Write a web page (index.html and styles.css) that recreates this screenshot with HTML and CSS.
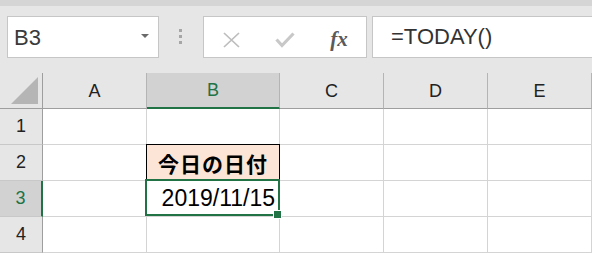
FILE: index.html
```html
<!DOCTYPE html>
<html lang="ja">
<head>
  <meta charset="UTF-8">
  <meta name="viewport" content="width=device-width, initial-scale=1.0">
  <title>Excel - TODAY</title>
  <link rel="stylesheet" href="styles.css">
</head>
<body>
  <div class="app">
    <div class="ribbon-edge"></div>

    <div class="toolbar">
      <div class="name-box">
        <span class="name">B3</span>
        <span class="caret"></span>
      </div>
      <div class="grip"><i></i><i></i><i></i></div>
      <div class="fx-buttons">
        <span class="btn">
          <svg width="17" height="16" viewBox="0 0 17 16"><path d="M1 1 L16 15 M16 1 L1 15" stroke="#bdbdbd" stroke-width="1.7" fill="none"/></svg>
        </span>
        <span class="btn">
          <svg width="20" height="16" viewBox="0 0 20 16"><path d="M1.5 7.5 L7 13.5 L18.5 1.5" stroke="#c8c8c8" stroke-width="3.2" fill="none"/></svg>
        </span>
        <span class="btn fx">fx</span>
      </div>
      <div class="formula">=TODAY()</div>
    </div>

    <div class="sheet">
      <div class="corner">
        <svg width="28" height="28" viewBox="0 0 28 28"><polygon points="0,27 27,0 27,27" fill="#b5b5b5"/></svg>
      </div>
      <div class="col-head">A</div>
      <div class="col-head active">B</div>
      <div class="col-head">C</div>
      <div class="col-head">D</div>
      <div class="col-head">E</div>

      <div class="row-head">1</div>
      <div class="cell"></div>
      <div class="cell"></div>
      <div class="cell"></div>
      <div class="cell"></div>
      <div class="cell"></div>

      <div class="row-head">2</div>
      <div class="cell"></div>
      <div class="cell label">今日の日付</div>
      <div class="cell"></div>
      <div class="cell"></div>
      <div class="cell"></div>

      <div class="row-head active">3</div>
      <div class="cell"></div>
      <div class="cell date selected">2019/11/15</div>
      <div class="cell"></div>
      <div class="cell"></div>
      <div class="cell"></div>

      <div class="row-head">4</div>
      <div class="cell"></div>
      <div class="cell"></div>
      <div class="cell"></div>
      <div class="cell"></div>
      <div class="cell"></div>
    </div>
  </div>
</body>
</html>
```

FILE: styles.css
```css
* {
  box-sizing: border-box;
}
body {
  margin: 0;
  font-family: "Liberation Sans", "Noto Sans CJK JP", sans-serif;
  background: #e6e6e6;
  overflow: hidden;
}
.app {
  width: 592px;
  height: 253px;
  background: #e6e6e6;
}
.ribbon-edge {
  height: 6px;
  background: #d5d5d5;
}

/* toolbar: name box + formula bar */
.toolbar {
  display: flex;
  align-items: flex-start;
  height: 67px;
  padding: 10px 0 0 7px;
}
.name-box {
  width: 152px;
  height: 42px;
  background: white;
  border: 1px solid #c6c6c6;
  display: flex;
  align-items: center;
  justify-content: space-between;
  padding: 2px 9px 0 6px;
}
.name {
  font-size: 22px;
  color: #3a3a3a;
}
.caret {
  width: 0;
  height: 0;
  border-left: 4px solid transparent;
  border-right: 4px solid transparent;
  border-top: 4px solid #6a6a6a;
  margin-top: -4px;
}
.grip {
  display: flex;
  flex-direction: column;
  gap: 3px;
  margin: 13px 0 0 20px;
}
.grip i {
  display: block;
  width: 3px;
  height: 3px;
  background: #a6a6a6;
}
.fx-buttons {
  display: grid;
  grid-template-columns: repeat(3, 54px);
  width: 164px;
  height: 42px;
  margin-left: 21px;
  background: white;
  border: 1px solid #c6c6c6;
}
.btn {
  display: flex;
  align-items: center;
  justify-content: center;
  padding-top: 5px;
}
.btn.fx {
  font-family: "Liberation Serif", serif;
  font-style: italic;
  font-weight: bold;
  font-size: 21px;
  color: #5a5a5a;
  padding-top: 4px;
}
.formula {
  flex: 1;
  height: 42px;
  margin-left: 5px;
  background: white;
  border: 1px solid #c6c6c6;
  border-right: none;
  padding: 7px 0 0 18px;
  font-size: 22px;
  color: #333;
}

/* worksheet grid */
.sheet {
  display: grid;
  grid-template-columns: 43px 104px 133px 104px 104px 104px;
  grid-template-rows: repeat(5, 36px);
}
.sheet > div {
  border-right: 1px solid #d4d4d4;
  border-bottom: 1px solid #d4d4d4;
  display: flex;
  align-items: center;
  justify-content: center;
  font-size: 18px;
  color: #222;
}
.corner {
  background: #e6e6e6;
  border-right-color: #9e9e9e !important;
  border-bottom-color: #9e9e9e !important;
  align-items: flex-end !important;
  justify-content: flex-end !important;
  padding: 0 3px 3px 0;
}
.corner svg {
  display: block;
}
.col-head {
  background: #e6e6e6;
  border-right-color: #b4b4b4 !important;
  border-bottom-color: #9e9e9e !important;
  padding-top: 1px;
}
.col-head.active {
  background: #d2d2d2;
  color: #217346 !important;
  border-bottom: 2px solid #217346 !important;
}
.row-head {
  background: #e6e6e6;
  border-right-color: #9e9e9e !important;
  border-bottom-color: #c8c8c8 !important;
}
.row-head.active {
  background: #d2d2d2;
  color: #217346 !important;
  border-right: 2px solid #217346 !important;
}
.cell {
  background: white;
}
.cell.label {
  position: relative;
  background: #fce4d6;
  font-size: 21px;
  font-weight: bold;
  color: #000;
  letter-spacing: 1px;
}
.cell.label::after {
  content: "";
  position: absolute;
  top: -1px;
  left: -1px;
  right: -1px;
  bottom: -1px;
  border: 1px solid #000;
}
.cell.date {
  justify-content: flex-end;
  padding-right: 4px;
  font-size: 23px;
  color: #000;
}
.cell.selected {
  position: relative;
}
.cell.selected::after {
  content: "";
  position: absolute;
  top: -2px;
  left: -2px;
  right: -1px;
  bottom: 0;
  border: 2px solid #217346;
}
.cell.selected::before {
  content: "";
  position: absolute;
  right: -3px;
  bottom: -3px;
  width: 7px;
  height: 7px;
  background: #217346;
  border: 1px solid white;
  z-index: 2;
}
```
